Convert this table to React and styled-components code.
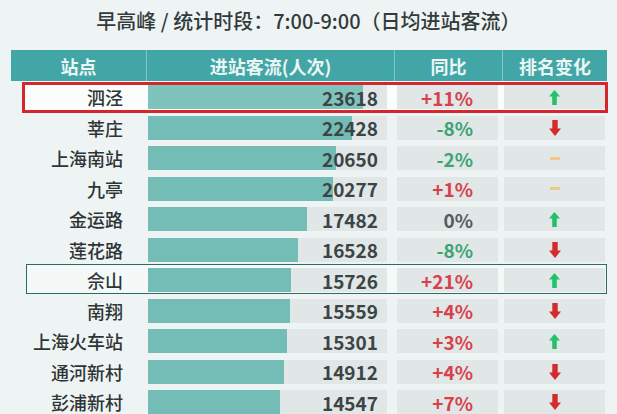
import styled, { createGlobalStyle } from 'styled-components'

const GlobalStyle = createGlobalStyle`
  html, body {
    margin: 0;
    padding: 0;
    background: #eef4f3;
  }
  body {
    font-family: "Noto Sans CJK SC", "Noto Sans", sans-serif;
  }
`

const rows = [
  { name: '泗泾', flow: 23618, yoy: '+11%', rank: 'up', mark: 'red' },
  { name: '莘庄', flow: 22428, yoy: '-8%', rank: 'down' },
  { name: '上海南站', flow: 20650, yoy: '-2%', rank: 'same' },
  { name: '九亭', flow: 20277, yoy: '+1%', rank: 'same' },
  { name: '金运路', flow: 17482, yoy: '0%', rank: 'up' },
  { name: '莲花路', flow: 16528, yoy: '-8%', rank: 'down' },
  { name: '佘山', flow: 15726, yoy: '+21%', rank: 'up', mark: 'teal' },
  { name: '南翔', flow: 15559, yoy: '+4%', rank: 'down' },
  { name: '上海火车站', flow: 15301, yoy: '+3%', rank: 'up' },
  { name: '通河新村', flow: 14912, yoy: '+4%', rank: 'down' },
  { name: '彭浦新村', flow: 14547, yoy: '+7%', rank: 'down' },
]

const yoyTone = v => (v.startsWith('+') ? 'up' : v.startsWith('-') ? 'down' : 'flat')

const RankIcon = ({ dir }) => {
  if (dir === 'same') return <Dash />
  if (dir === 'up')
    return (
      <svg width='11' height='15' viewBox='0 0 11 15'>
        <polygon points='5.5,0 11,6.5 7.8,6.5 7.8,15 3.2,15 3.2,6.5 0,6.5' fill='#23c26a' />
      </svg>
    )
  return (
    <svg width='12' height='16' viewBox='0 0 12 16'>
      <polygon points='3.3,0 8.7,0 8.7,8.5 12,8.5 6,16 0,8.5 3.3,8.5' fill='#d42a2e' />
    </svg>
  )
}

export default () => (
  <Page>
    <GlobalStyle />
    <Title>早高峰 / 统计时段：7:00-9:00（日均进站客流）</Title>
    <Header>
      <HeadCell>站点</HeadCell>
      <HeadCell>进站客流(人次)</HeadCell>
      <HeadCell>同比</HeadCell>
      <HeadCell>排名变化</HeadCell>
    </Header>
    {rows.map(r => (
      <Row key={r.name} $mark={r.mark}>
        <Name>{r.name}</Name>
        <Flow>
          <Bar $light={r.mark === 'red'} style={{ width: Math.round(r.flow * 0.0091) }} />
          <Num>{r.flow}</Num>
        </Flow>
        <Cell>
          <Yoy $tone={yoyTone(r.yoy)}>{r.yoy}</Yoy>
        </Cell>
        <Cell $center>
          <RankIcon dir={r.rank} />
        </Cell>
      </Row>
    ))}
  </Page>
)

const Page = styled.div`
  width: 617px;
  height: 414px;
  overflow: hidden;
  padding-left: 11px;
  box-sizing: border-box;
`

const Title = styled.div`
  height: 42px;
  line-height: 42px;
  margin-bottom: 8px;
  padding-right: 11px;
  text-align: center;
  font-size: 20px;
  font-weight: 500;
  color: #333a3b;
`

const Header = styled.div`
  display: grid;
  grid-template-columns: 135px 248px 108px 105px;
  width: 596px;
  height: 31px;
  background: #43a6a6;
`

const HeadCell = styled.div`
  display: flex;
  align-items: center;
  justify-content: center;
  font-size: 18px;
  font-weight: 700;
  color: #e9f6f5;
  & + & {
    border-left: 1px solid #86c7c5;
  }
`

const Row = styled.div`
  position: relative;
  display: grid;
  grid-template-columns: 137px 239px 111px 107px;
  align-items: center;
  width: 596px;
  height: 30.5px;
  margin-top: ${p => (p.$mark === 'red' ? '1px' : '0')};

  &::before {
    content: ${p => (p.$mark ? "''" : 'none')};
    position: absolute;
    box-sizing: border-box;
    left: ${p => (p.$mark === 'red' ? '11px' : '15px')};
    right: ${p => (p.$mark === 'red' ? '-1px' : '0')};
    top: ${p => (p.$mark === 'red' ? '0' : '-1px')};
    bottom: ${p => (p.$mark === 'red' ? '0' : '2px')};
    border: ${p => (p.$mark === 'red' ? '3px solid #d4262c' : '1.5px solid #2e6b67')};
    background: ${p => (p.$mark === 'red' ? '#fbfcfc' : '#f4f9f8')};
  }
`

const Name = styled.div`
  position: relative;
  padding-right: 25px;
  text-align: right;
  font-size: 18px;
  font-weight: 500;
  color: #2f3536;
`

const Flow = styled.div`
  position: relative;
  display: grid;
  height: 24px;
  background: #e1e6e6;

  > * {
    grid-area: 1 / 1;
  }
`

const Bar = styled.div`
  height: 100%;
  background: ${p => (p.$light ? '#7fc3bd' : '#73bdb6')};
`

const Num = styled.span`
  position: relative;
  justify-self: end;
  align-self: center;
  padding-right: 9px;
  font-size: 19px;
  font-weight: 700;
  line-height: 1;
  color: #3b4546;
`

const Cell = styled.div`
  position: relative;
  justify-self: end;
  display: flex;
  align-items: center;
  justify-content: ${p => (p.$center ? 'center' : 'flex-end')};
  width: 101px;
  height: 24px;
  background: #e1e6e6;
`

const Yoy = styled.span`
  padding-right: 25px;
  font-size: 19px;
  font-weight: 700;
  color: ${p => (p.$tone === 'up' ? '#d8404c' : p.$tone === 'down' ? '#3aa474' : '#525c5e')};
`

const Dash = styled.span`
  width: 10px;
  height: 3px;
  border-radius: 1px;
  background: #efc887;
`
